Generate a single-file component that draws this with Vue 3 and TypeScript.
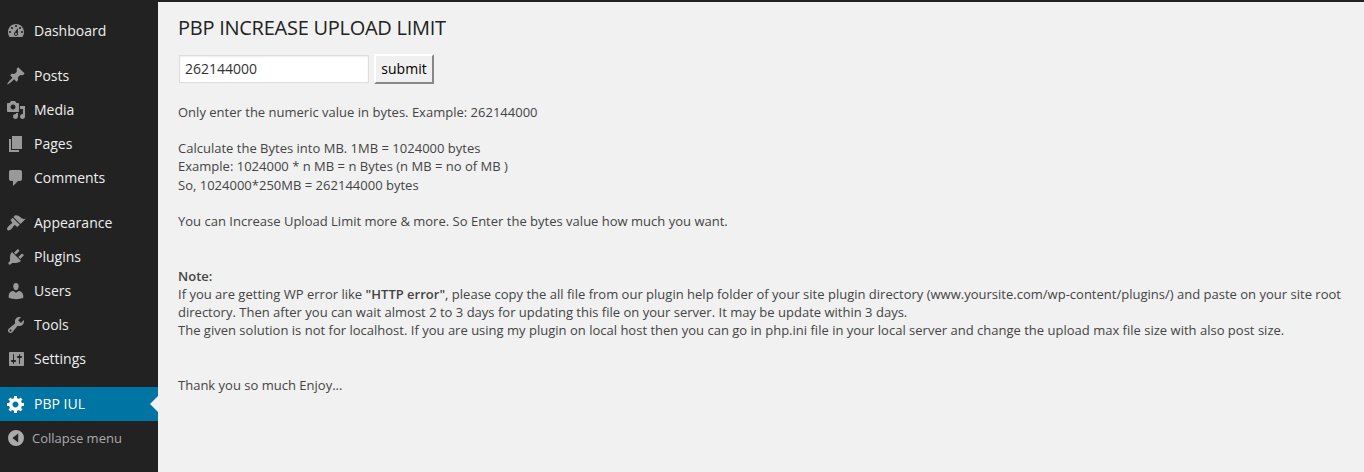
<script setup lang="ts">
import { ref } from 'vue'

interface MenuItem {
  label: string
  icon: string
  current?: boolean
}

const limit = ref('262144000')

const groups: MenuItem[][] = [
  [
    {
      label: 'Dashboard',
      icon: 'M3.76 16h12.48c1.1-1.37 1.76-3.11 1.76-5 0-4.42-3.58-8-8-8s-8 3.58-8 8c0 1.89.66 3.63 1.76 5zM10 4c.55 0 1 .45 1 1s-.45 1-1 1-1-.45-1-1 .45-1 1-1zM6 6c.55 0 1 .45 1 1s-.45 1-1 1-1-.45-1-1 .45-1 1-1zm8 0c.55 0 1 .45 1 1s-.45 1-1 1-1-.45-1-1 .45-1 1-1zm-5.37 5.55L12 7v6c0 1.1-.9 2-2 2s-2-.9-2-2c0-.57.24-1.08.63-1.45zM4 10c.55 0 1 .45 1 1s-.45 1-1 1-1-.45-1-1 .45-1 1-1zm12 0c.55 0 1 .45 1 1s-.45 1-1 1-1-.45-1-1 .45-1 1-1zm-5 3c0-.55-.45-1-1-1s-1 .45-1 1 .45 1 1 1 1-.45 1-1z',
    },
  ],
  [
    {
      label: 'Posts',
      icon: 'M10.44 3.02l1.82-1.82 6.36 6.35-1.83 1.82c-1.05-.68-2.48-.57-3.41.36l-.75.75c-.92.93-1.04 2.35-.35 3.41l-1.83 1.82-2.41-2.41-2.8 2.79c-.42.42-3.38 2.71-3.8 2.29s1.86-3.39 2.28-3.81l2.79-2.79L4.1 9.36l1.83-1.82c1.05.69 2.48.57 3.4-.36l.75-.75c.93-.92 1.05-2.35.36-3.41z',
    },
    {
      label: 'Media',
      icon: 'M13 11V4c0-.55-.45-1-1-1h-1.67L9 1H5L3.67 3H2c-.55 0-1 .45-1 1v7c0 .55.45 1 1 1h10c.55 0 1-.45 1-1zM7 4.5c1.38 0 2.5 1.12 2.5 2.5S8.38 9.5 7 9.5 4.5 8.38 4.5 7 5.62 4.5 7 4.5zM14 6h5v10.5c0 1.38-1.12 2.5-2.5 2.5S14 17.88 14 16.5s1.12-2.5 2.5-2.5c.17 0 .34.02.5.05V9h-3V6zm-4 8.05V13h2v3.5c0 1.38-1.12 2.5-2.5 2.5S7 17.88 7 16.5 8.12 14 9.5 14c.17 0 .34.02.5.05z',
    },
    { label: 'Pages', icon: 'M6 15V2h10v13H6zm-1 1h8v2H3V5h2v11z' },
    {
      label: 'Comments',
      icon: 'M5 2h9c1.1 0 2 .9 2 2v7c0 1.1-.9 2-2 2h-2l-5 5v-5H5c-1.1 0-2-.9-2-2V4c0-1.1.9-2 2-2z',
    },
  ],
  [
    {
      label: 'Appearance',
      icon: 'M14.48 11.06L7.41 3.99l1.5-1.5c.5-.56 2.3-.47 3.51.32 1.21.8 1.43 1.28 2.91 2.1 1.18.64 2.45 1.26 4.45.85zm-.71.71L6.7 4.7 4.93 6.47c-.39.39-.39 1.02 0 1.41l1.06 1.06c.39.39.39 1.03 0 1.42-.6.6-1.43 1.11-2.21 1.69-.35.26-.7.53-1.01.84C1.43 14.23.4 16.08 1.4 17.07c.99 1 2.84-.03 4.18-1.36.31-.31.58-.66.85-1.02.57-.78 1.08-1.61 1.69-2.21.39-.39 1.02-.39 1.41 0l1.06 1.06c.39.39 1.02.39 1.41 0z',
    },
    {
      label: 'Plugins',
      icon: 'M13.11 4.36L9.87 7.6 8 5.73l3.24-3.24c.35-.34 1.05-.2 1.56.32.52.51.66 1.21.31 1.55zm-8 1.77l.91-1.12 9.01 9.01-1.19.84c-.71.71-2.63 1.16-3.82 1.16H6.14L4.9 17.26c-.59.59-1.54.59-2.12 0-.59-.58-.59-1.53 0-2.12l1.24-1.24v-3.88c0-1.13.4-3.19 1.09-3.89zm7.26 3.97l3.24-3.24c.34-.35 1.04-.21 1.55.31.52.51.66 1.21.31 1.55l-3.24 3.25z',
    },
    {
      label: 'Users',
      icon: 'M10 9.25c-2.27 0-2.73-3.44-2.73-3.44C7 4.02 7.82 2 9.97 2c2.16 0 2.98 2.02 2.71 3.81 0 0-.41 3.44-2.68 3.44zm0 2.57L12.72 10c2.39 0 4.52 2.33 4.52 4.53v2.49s-3.65 1.13-7.24 1.13c-3.65 0-7.24-1.13-7.24-1.13v-2.49c0-2.25 1.94-4.48 4.47-4.48z',
    },
    {
      label: 'Tools',
      icon: 'M16.68 9.77c-1.34 1.34-3.3 1.67-4.95.99l-5.41 6.52c-.99.99-2.59.99-3.58 0s-.99-2.59 0-3.57l6.52-5.42c-.68-1.65-.35-3.61.99-4.95 1.28-1.28 3.12-1.62 4.72-1.06l-2.89 2.89 2.82 2.82 2.86-2.87c.53 1.58.18 3.39-1.08 4.65zM3.81 16.21c.4.39 1.04.39 1.43 0 .4-.4.4-1.04 0-1.43-.39-.4-1.03-.4-1.43 0-.39.39-.39 1.03 0 1.43z',
    },
    {
      label: 'Settings',
      icon: 'M18 16V4c0-.55-.45-1-1-1H4c-.55 0-1 .45-1 1v12c0 .55.45 1 1 1h13c.55 0 1-.45 1-1zM8 11h1c.55 0 1 .45 1 1s-.45 1-1 1H8v1.5c0 .28-.22.5-.5.5s-.5-.22-.5-.5V13H6c-.55 0-1-.45-1-1s.45-1 1-1h1V5.5c0-.28.22-.5.5-.5s.5.22.5.5V11zm5-2h-1c-.55 0-1-.45-1-1s.45-1 1-1h1V5.5c0-.28.22-.5.5-.5s.5.22.5.5V7h1c.55 0 1 .45 1 1s-.45 1-1 1h-1v5.5c0 .28-.22.5-.5.5s-.5-.22-.5-.5V9z',
    },
  ],
  [
    {
      label: 'PBP IUL',
      current: true,
      icon: 'M18 12h-2.18c-.17.7-.44 1.35-.81 1.93l1.54 1.54-2.1 2.1-1.54-1.54c-.58.36-1.23.63-1.91.79V19H8v-2.18c-.68-.16-1.33-.43-1.91-.79l-1.54 1.54-2.12-2.12 1.54-1.54c-.36-.58-.63-1.23-.79-1.91H1V9.03h2.17c.16-.7.44-1.35.8-1.94L2.43 5.55l2.1-2.1 1.54 1.54c.58-.37 1.24-.64 1.93-.81V2h3v2.18c.68.16 1.33.43 1.91.79l1.54-1.54 2.12 2.12-1.54 1.54c.36.59.64 1.24.8 1.94H18V12zm-8.5 1.5c1.66 0 3-1.34 3-3s-1.34-3-3-3-3 1.34-3 3 1.34 3 3 3z',
    },
  ],
]
</script>

<template>
  <div class="admin">
    <nav class="sidebar">
      <ul v-for="(group, i) in groups" :key="i" class="group">
        <li v-for="item in group" :key="item.label" class="item" :class="{ current: item.current }">
          <svg class="icon" viewBox="0 0 20 20"><path fill-rule="evenodd" :d="item.icon" /></svg>
          <span>{{ item.label }}</span>
        </li>
      </ul>
      <div class="collapse">
        <svg class="icon" viewBox="0 0 20 20">
          <path fill-rule="evenodd" d="M10 2a8 8 0 1 0 0 16 8 8 0 0 0 0-16zM12.2 5.6v8.8L6.4 10z" />
        </svg>
        <span>Collapse menu</span>
      </div>
    </nav>
    <main class="content">
      <h2 class="title">PBP INCREASE UPLOAD LIMIT</h2>
      <form class="form" @submit.prevent>
        <input v-model="limit" class="field" type="text" />
        <button class="submit" type="submit">submit</button>
      </form>
      <div class="text">
        Only enter the numeric value in bytes. Example: 262144000<br /><br />
        Calculate the Bytes into MB. 1MB = 1024000 bytes<br />
        Example: 1024000 * n MB = n Bytes (n MB = no of MB )<br />
        So, 1024000*250MB = 262144000 bytes<br /><br />
        You can Increase Upload Limit more &amp; more. So Enter the bytes value how much you want.<br /><br /><br />
        <b>Note:</b><br />
        If you are getting WP error like <b>"HTTP error"</b>, please copy the all file from our plugin help folder of your site plugin directory (www.yoursite.com/wp-content/plugins/) and paste on your site root<br />
        directory. Then after you can wait almost 2 to 3 days for updating this file on your server. It may be update within 3 days.<br />
        The given solution is not for localhost. If you are using my plugin on local host then you can go in php.ini file in your local server and change the upload max file size with also post size.<br /><br /><br />
        Thank you so much Enjoy...
      </div>
    </main>
  </div>
</template>

<style>
body {
  margin: 0;
  background: #f1f1f1;
}
</style>

<style scoped>
.admin {
  box-sizing: border-box;
  display: flex;
  height: 472px;
  overflow: hidden;
  border-top: 2px solid #222;
  background: #f1f1f1;
  color: #444;
  font-family: 'Open Sans', sans-serif;
  font-size: 13px;
  line-height: 1.4;
}
.sidebar {
  box-sizing: border-box;
  flex: none;
  width: 158px;
  padding-top: 12px;
  background: #222;
}
.group {
  margin: 0;
  padding: 0;
  list-style: none;
}
.group + .group {
  margin-top: 11px;
}
.item,
.collapse {
  position: relative;
  display: flex;
  align-items: center;
  height: 34px;
  padding-left: 6px;
}
.item {
  gap: 8px;
  color: #eee;
  font-size: 14px;
}
.icon {
  flex: none;
  width: 20px;
  height: 20px;
  fill: #999;
}
.current {
  background: #0074a2;
  color: #fff;
}
.current .icon {
  fill: #fff;
}
.current::after {
  content: '';
  position: absolute;
  right: 0;
  top: 9px;
  border: 8px solid transparent;
  border-left-width: 0;
  border-right-color: #f1f1f1;
}
.collapse {
  gap: 6px;
  color: #aaa;
}
.collapse .icon {
  fill: #aaa;
}
.content {
  flex: 1;
  min-width: 0;
  padding-left: 20px;
}
.title {
  margin: 12px 0 0;
  color: #222;
  font-size: 20px;
  font-weight: 400;
  letter-spacing: -0.26px;
  line-height: 28px;
}
.form {
  display: flex;
  align-items: center;
  gap: 5px;
  height: 30px;
  margin-top: 12px;
}
.field {
  box-sizing: border-box;
  width: 190px;
  height: 28px;
  margin-left: 1px;
  padding: 2px 5px 4px;
  border: 1px solid #ddd;
  background: #fff;
  box-shadow: inset 0 1px 2px rgba(0, 0, 0, 0.07);
  color: #333;
  font: 14px 'Open Sans', sans-serif;
}
.submit {
  box-sizing: border-box;
  width: 60px;
  height: 30px;
  padding: 0 0 2px;
  border: 2px solid;
  border-color: #fff #888 #888 #fff;
  border-radius: 0;
  background: #f0f0f0;
  color: #000;
  font: 14px 'Open Sans', sans-serif;
}
.text {
  margin-top: 18.9px;
  letter-spacing: 0.008px;
  white-space: nowrap;
}
.text b {
  font-weight: 600;
}
</style>
